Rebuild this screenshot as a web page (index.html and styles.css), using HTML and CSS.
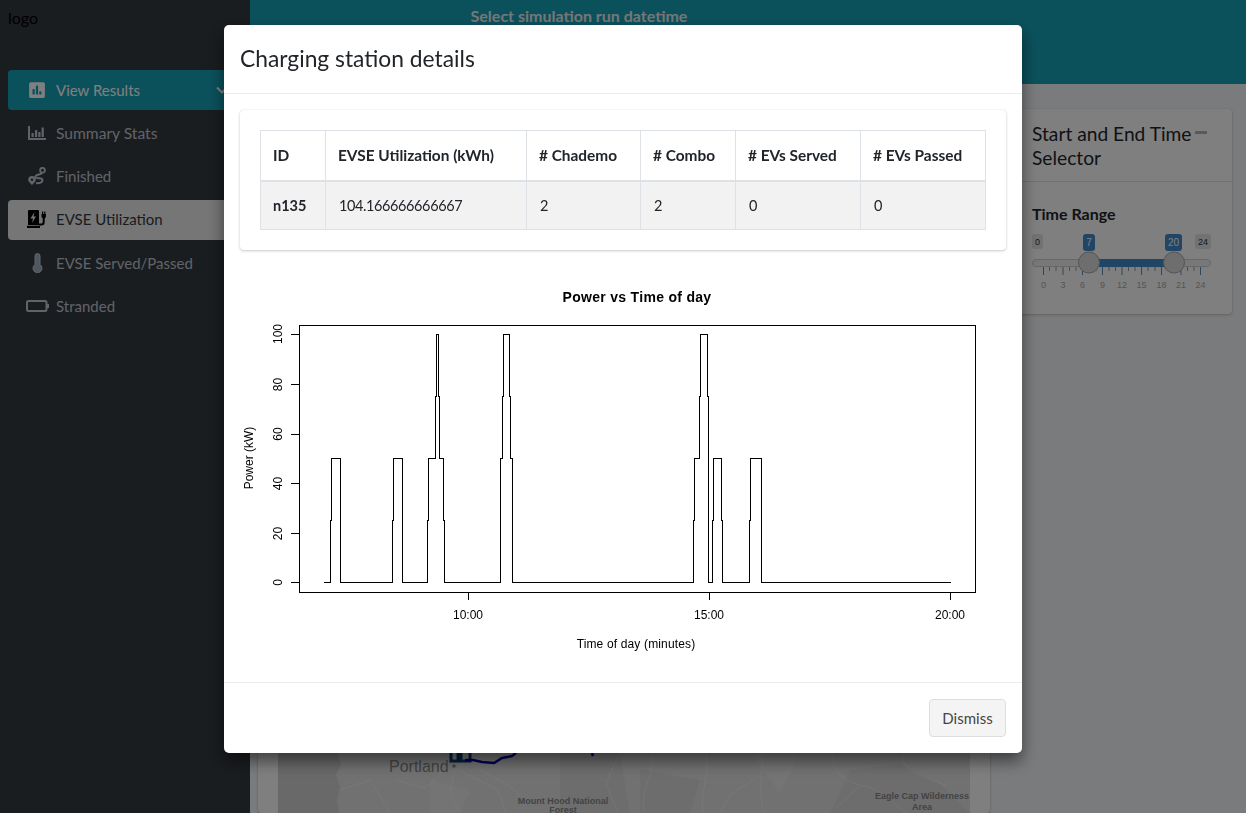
FILE: index.html
```html
<!DOCTYPE html>
<html lang="en">
<head>
  <meta charset="UTF-8" />
  <title>EVSE Utilization</title>
  <link rel="stylesheet" href="styles.css">
</head>
<body>
  <div class="wrapper">
    <aside class="sidebar">
      <div class="logo">logo</div>
      <nav class="nav">
        <a class="nav-item nav-open">
          <span class="nav-icon">
            <svg width="16" height="18" viewBox="0 0 448 512"><path fill="currentColor" d="M400 32H48C21.5 32 0 53.5 0 80v352c0 26.5 21.5 48 48 48h352c26.5 0 48-21.5 48-48V80c0-26.5-21.5-48-48-48zM160 368c0 8.84-7.16 16-16 16h-32c-8.84 0-16-7.16-16-16V240c0-8.84 7.16-16 16-16h32c8.84 0 16 7.16 16 16v128zm96 0c0 8.84-7.16 16-16 16h-32c-8.84 0-16-7.16-16-16V144c0-8.84 7.16-16 16-16h32c8.84 0 16 7.16 16 16v224zm96 0c0 8.84-7.16 16-16 16h-32c-8.84 0-16-7.16-16-16v-64c0-8.84 7.16-16 16-16h32c8.84 0 16 7.16 16 16v64z"/></svg>
          </span>
          View Results
          <svg class="chevron" width="12" height="8" viewBox="0 0 12 8"><path d="M1 1.500l5 5 5-5" fill="none" stroke="currentColor" stroke-width="2"/></svg>
        </a>
        <a class="nav-item">
          <span class="nav-icon">
            <svg width="18" height="14" viewBox="0 0 18 14"><path fill="currentColor" d="M0 0h2v12h16v2H0z"/><path fill="currentColor" d="M3.500 7h2.200v4H3.500zM7 4h2.200v7H7zM10.300 6h2.200v5h-2.200zM13.600 1.500h2.200V11h-2.200z"/></svg>
          </span>
          <span class="wide-label">Summary Stats</span>
        </a>
        <a class="nav-item">
          <span class="nav-icon">
            <svg width="19" height="18" viewBox="0 0 19 18"><path d="M14 6c-.5 2-6.500 1-6.500 3.700s7 .6 7 3.300-3 3.300-6.500 3.300" fill="none" stroke="currentColor" stroke-width="2"/><circle cx="14.500" cy="3.200" r="2.400" fill="none" stroke="currentColor" stroke-width="1.800"/><path fill="currentColor" d="M4 9a3.800 3.800 0 0 1 3.800 3.800C7.800 14.800 4 18 4 18S.2 14.800.2 12.800A3.800 3.800 0 0 1 4 9z"/><circle cx="4" cy="12.700" r="1.300" class="hole"/></svg>
          </span>
          Finished
        </a>
        <a class="nav-item nav-active">
          <span class="nav-icon">
            <svg width="21" height="18" viewBox="0 0 21 18"><path fill="#000" d="M2 0h9a1 1 0 0 1 1 1v14H1V1a1 1 0 0 1 1-1zM0 15.700h13V18H0z"/><path class="bolt" d="M7.500 2L3.500 8.500H6L5 13l4-6.500H6.500z"/><path d="M12 14.500h2.500c1.500 0 2.200-1 2.200-2.500V8" fill="none" stroke="#000" stroke-width="2"/><path fill="#000" d="M14.500 4h4.400v2.500c0 1.200-.9 2-2.200 2s-2.200-.8-2.200-2zM15 1.500h1.200V4H15zM17.200 1.500h1.200V4h-1.200z"/></svg>
          </span>
          EVSE Utilization
        </a>
        <a class="nav-item">
          <span class="nav-icon">
            <svg width="11" height="20" viewBox="0 0 11 20"><path class="thermo" d="M3 11.500V3a2.500 2.500 0 0 1 5 0v8.500a4.500 4.500 0 1 1-5 0z"/></svg>
          </span>
          EVSE Served/Passed
        </a>
        <a class="nav-item">
          <span class="nav-icon">
            <svg width="23" height="12" viewBox="0 0 23 12"><rect x="1" y="1" width="19.500" height="10" rx="1.500" fill="none" stroke="currentColor" stroke-width="2"/><path fill="currentColor" d="M21 4h2v4h-2z"/></svg>
          </span>
          Stranded
        </a>
      </nav>
    </aside>

    <div class="main">
      <header class="topbar">
        <label class="run-label">Select simulation run datetime</label>
      </header>
      <div class="content">
        <section class="card map-card">
          <div class="map-wrap">
            <svg class="map" width="634" height="684" viewBox="336 129 634 684">
              <path d="M338 129H970V813H339l-2-12 3-14-4-12 5-10-3-10z" fill="#e3e3e3"/>
              <path d="M560 753h60l10 60h-70zM640 770l60 10-10 33h-50zM850 770l50-6 40 20 30 29H830z" fill="#dadada"/>
              <path d="M430 780l40 10-10 23h-30zM750 753h50l-20 40z" fill="#e8e8e8"/>
              <g class="map-roads">
                <path d="M455 770l-5 20 10 23M470 753l-12 17 40 20 8 23M395 780l30 8 20-18M650 753c8 20-10 30-6 60M706 753c4 30-8 40-2 60M834 753c-6 20 16 30 30 33s20 10 42 27M860 786l-24 22M905 753c-10 16 20 24 42 33"/>
                <path d="M480 770l30 16 10 10M340 790l30-10 20 33M760 775l-30 20-10 18M620 753l-14 30 12 30M760 753c6 10-4 30 4 60"/>
              </g>
              <path class="map-route-dark" d="M451 753v8h7v-8M461 753v8h9v-8"/>
              <path class="map-route" d="M465 760h8l9 2 12 1 8-5 10-2 4-3"/>
              <path class="map-route" d="M592 753l1 3"/>
              <circle cx="454" cy="766" r="1.700" fill="#8c8c8c"/>
              <text class="map-city" x="389" y="772">Portland</text>
              <text class="map-park" x="563" y="804">Mount Hood National</text>
              <text class="map-park" x="563" y="812.500">Forest</text>
              <text class="map-park" x="922" y="799">Eagle Cap Wilderness</text>
              <text class="map-park" x="922" y="810">Area</text>
            </svg>
          </div>
        </section>

        <section class="card time-card">
          <div class="card-head">
            <h3 class="card-title">Start and End Time Selector</h3>
            <span class="minus"></span>
          </div>
          <div class="card-body">
            <div class="field-label">Time Range</div>
            <svg class="slider" width="180" height="70" viewBox="1032 230 180 70">
              <rect class="tag" x="1032" y="234" width="11" height="15" rx="3"/>
              <text class="tag-text" x="1037.500" y="245">0</text>
              <rect class="tag" x="1195" y="234" width="16" height="15" rx="3"/>
              <text class="tag-text" x="1203" y="245">24</text>
              <rect class="line" x="1032.500" y="259.500" width="178" height="7" rx="3.500"/>
              <rect class="bar" x="1089" y="259" width="85" height="8"/>
              <path class="major" d="M1043.500 267v8M1063 267v8M1082.500 267v8M1102.500 267v8M1122 267v8M1141.500 267v8M1161.500 267v8M1181 267v8M1200.500 267v8"/>
              <path class="minor" d="M1049.500 267v4M1056 267v4M1069.500 267v4M1076 267v4M1089 267v4M1096 267v4M1109 267v4M1115.500 267v4M1128.500 267v4M1135 267v4M1148 267v4M1155 267v4M1168 267v4M1174.500 267v4M1187.500 267v4M1194 267v4"/>
              <g class="grid-text">
                <text x="1043.500" y="288">0</text><text x="1063" y="288">3</text><text x="1082.500" y="288">6</text>
                <text x="1102.500" y="288">9</text><text x="1122" y="288">12</text><text x="1141.500" y="288">15</text>
                <text x="1161.500" y="288">18</text><text x="1181" y="288">21</text><text x="1200.500" y="288">24</text>
              </g>
              <rect class="tag-on" x="1083" y="234" width="12" height="17" rx="3"/>
              <text class="tag-on-text" x="1089" y="246">7</text>
              <rect class="tag-on" x="1165" y="234" width="17" height="17" rx="3"/>
              <text class="tag-on-text" x="1173.500" y="246">20</text>
              <circle class="handle" cx="1089" cy="262.500" r="10.500"/>
              <circle class="handle" cx="1174" cy="262.500" r="10.500"/>
            </svg>
          </div>
        </section>
      </div>
    </div>
  </div>

  <!-- modal on top of the dashboard -->
  <div class="backdrop">
    <div class="modal">
      <div class="modal-header">
        <h4 class="modal-title">Charging station details</h4>
      </div>
      <div class="modal-body">
        <div class="table-card">
          <table class="details">
            <colgroup>
              <col class="col-id"><col class="col-util"><col class="col-chademo">
              <col class="col-combo"><col class="col-served"><col class="col-passed">
            </colgroup>
            <thead>
              <tr>
                <th>ID</th>
                <th>EVSE Utilization (kWh)</th>
                <th># Chademo</th>
                <th># Combo</th>
                <th># EVs Served</th>
                <th># EVs Passed</th>
              </tr>
            </thead>
            <tbody>
              <tr>
                <th>n135</th>
                <td>104.166666666667</td>
                <td>2</td>
                <td>2</td>
                <td>0</td>
                <td>0</td>
              </tr>
            </tbody>
          </table>
        </div>

        <svg class="plot" width="766" height="396" viewBox="240 270 766 396">
          <text class="plot-title" x="637" y="302">Power vs Time of day</text>
          <rect class="plot-line" x="299.500" y="325.500" width="676" height="267"/>
          <path class="plot-line" d="M324 582.500H330.500V520H331.500V458.500H340.500V582.500H392.500V520H393.500V458.500H402.500V582.500H427.500V520H428.500V458.500H435.500V396H436.500V334.500H438.500V396H439.500V458.500H443.500V520H444.500V582.500H500.500V458.500H502.500V396H503.500V334.500H509.500V396H510.500V458.500H512.500V582.500H693.500V520H694.500V458.500H699.500V396H700.500V334.500H707.500V396H708.500V582.500H712.500V520H713.500V458.500H721.500V520H722.500V582.500H749.500V520H750.500V458.500H761.500V582.500H950.500"/>
          <path class="plot-line" d="M299 582.500h-8M299 533.500h-8M299 483.500h-8M299 434.500h-8M299 384.500h-8M299 334.500h-8M468.500 592v8M709.500 592v8M950.500 592v8"/>
          <g class="plot-text">
            <text transform="translate(282 582.500) rotate(-90)">0</text>
            <text transform="translate(282 533.500) rotate(-90)">20</text>
            <text transform="translate(282 483.500) rotate(-90)">40</text>
            <text transform="translate(282 434) rotate(-90)">60</text>
            <text transform="translate(282 384.500) rotate(-90)">80</text>
            <text transform="translate(282 334) rotate(-90)">100</text>
            <text transform="translate(253 458) rotate(-90)">Power (kW)</text>
            <text x="468" y="619">10:00</text>
            <text x="709" y="619">15:00</text>
            <text x="950" y="619">20:00</text>
            <text class="plot-xlab" x="636" y="648">Time of day (minutes)</text>
          </g>
        </svg>
      </div>
      <div class="modal-footer">
        <button type="button" class="btn-dismiss">Dismiss</button>
      </div>
    </div>
  </div>
</body>
</html>
```

FILE: styles.css
```css
* {
  box-sizing: border-box;
}

html, body {
  height: 100%;
}

body {
  margin: 0;
  overflow: hidden;
  font-family: Lato, "Noto Sans", sans-serif;
  font-size: 16px;
  color: #212529;
  background: #f4f6f9;
}

.wrapper {
  display: flex;
  height: 813px;
  overflow: hidden;
}

/* sidebar */
.sidebar {
  width: 250px;
  flex: none;
  background: #343a40;
}

.logo {
  height: 70px;
  padding: 8px;
  color: #000;
  line-height: 20px;
}

.nav {
  display: flex;
  flex-direction: column;
  gap: 3.2px;
  padding: 0 8px;
}

.nav-item {
  display: flex;
  align-items: center;
  gap: 7px;
  height: 40px;
  padding: 0 0 .4px 17px;
  border-radius: 4px;
  color: #c2c7d0;
  font-size: 15px;
}

.nav-open {
  background: #17a2b8;
  color: #fff;
}

.nav-active {
  background: #ececec;
  color: #343a40;
}

.nav-icon {
  display: flex;
  align-items: center;
  justify-content: center;
  width: 24px;
  flex: none;
}

.wide-label {
  font-size: 15.6px;
}

.hole {
  fill: #343a40;
}

.bolt {
  fill: #ececec;
}

.thermo {
  fill: #9fb0c4;
  stroke: #c2c7d0;
  stroke-width: 1;
}

.chevron {
  margin-left: auto;
  margin-right: 14px;
}

/* main area */
.main {
  flex: 1;
  min-width: 0;
}

.topbar {
  height: 84px;
  padding-top: 7px;
  background: #17a2b8;
  text-align: center;
}

.run-label {
  display: block;
  width: 658px;
  color: #eee;
  font-weight: 700;
  line-height: 18px;
}

.content {
  display: flex;
  align-items: flex-start;
  gap: 22px;
  padding: 25px 15px 0 8px;
}

.card {
  background: #fff;
  border-radius: 4px;
  box-shadow: 0 0 1px rgba(0, 0, 0, .125), 0 1px 3px rgba(0, 0, 0, .2);
}

.map-card {
  width: 732px;
  flex: none;
  height: 704px;
  padding: 20px 20px 0;
}

.map-wrap {
  height: 684px;
  padding-left: 58px;
  background: #d2d2d2;
}

.map {
  display: block;
}

.map-roads path {
  fill: none;
  stroke: #fff;
  stroke-opacity: .4;
  stroke-width: 1;
}

.map-route {
  fill: none;
  stroke: #0000b0;
  stroke-width: 2.500;
}

.map-route-dark {
  fill: none;
  stroke: #0a3f7a;
  stroke-width: 3;
}

.map-city {
  font-family: "Liberation Sans", sans-serif;
  font-size: 16px;
  fill: #888;
}

.map-park {
  font-family: "Liberation Sans", sans-serif;
  font-size: 9px;
  font-weight: 700;
  fill: #888;
  text-anchor: middle;
}

.time-card {
  flex: 1;
  height: 205px;
}

.card-head {
  display: flex;
  height: 73px;
  padding: 13px 14px 0 20px;
  border-bottom: 1px solid #dee2e6;
}

.card-title {
  width: 163px;
  margin: 0;
  font-size: 19.2px;
  font-weight: 400;
  line-height: 24px;
}

.minus {
  width: 12px;
  height: 3px;
  margin-top: 9px;
  background: #adb5bd;
}

.card-body {
  padding: 22px 20px 0;
}

.field-label {
  font-weight: 700;
  line-height: 20px;
}

.slider {
  display: block;
  margin-top: 6px;
  font-family: "Liberation Sans", sans-serif;
}

.slider text {
  text-anchor: middle;
}

.tag {
  fill: #e1e4e9;
}

.tag-text {
  font-size: 9px;
  fill: #333;
}

.tag-on {
  fill: #428bca;
}

.tag-on-text {
  font-size: 10px;
  fill: #fff;
}

.line {
  fill: #f0f0f0;
  stroke: #cfcfcf;
}

.bar {
  fill: #428bca;
}

.major, .minor {
  stroke: #999;
  fill: none;
}

.major {
  stroke: #5f8fb8;
}

.grid-text {
  font-size: 9px;
  fill: #aaa;
}

.handle {
  fill: #dcdcdc;
  stroke: #a8a8a8;
}

/* modal */
.backdrop {
  position: fixed;
  inset: 0;
  background: rgba(0, 0, 0, .5);
}

.modal {
  width: 798px;
  margin: 25px auto 0;
  background: #fff;
  border-radius: 5px;
  box-shadow: 0 8px 16px rgba(0, 0, 0, .5);
}

.modal-header {
  height: 69px;
  padding: 19px 16px 0;
  border-bottom: 1px solid #e9ecef;
}

.modal-title {
  margin: 0;
  font-size: 22.8px;
  font-weight: 400;
  line-height: 29px;
}

.modal-body {
  padding: 16px;
}

.table-card {
  height: 140px;
  padding: 20px;
  border-radius: 4px;
  box-shadow: 0 0 1px rgba(0, 0, 0, .125), 0 1px 3px rgba(0, 0, 0, .2);
}

.details {
  width: 725px;
  table-layout: fixed;
  border-collapse: collapse;
  font-size: 15.4px;
}

.col-id { width: 65px; }
.col-util { width: 201px; }
.col-chademo { width: 114px; }
.col-combo { width: 95px; }
.col-served { width: 125px; }
.col-passed { width: 125px; }

.details th, .details td {
  height: 50px;
  padding: 0 12px;
  border: 1px solid #dee2e6;
  text-align: left;
}

.details thead th {
  border-bottom-width: 2px;
}

.details tbody th, .details tbody td {
  height: 49px;
}

.details tbody th {
  font-size: 14.5px;
}

.details td {
  padding-left: 13px;
  font-size: 14.5px;
  letter-spacing: -.4px;
}

.details tbody tr {
  background: #f2f2f2;
}

.plot {
  display: block;
  margin-top: 20px;
  font-family: "Liberation Sans", sans-serif;
}

.plot-line {
  fill: none;
  stroke: #000;
  stroke-width: 1;
  shape-rendering: crispEdges;
}

.plot-title {
  font-size: 14px;
  font-weight: 700;
  letter-spacing: .3px;
  text-anchor: middle;
}

.plot-text {
  font-size: 12px;
  text-anchor: middle;
}

.plot-xlab {
  letter-spacing: .15px;
}

.modal-footer {
  display: flex;
  justify-content: flex-end;
  padding: 16px;
  border-top: 1px solid #e9ecef;
}

.btn-dismiss {
  width: 77px;
  height: 38px;
  padding: 0;
  background: #f4f4f4;
  border: 1px solid #ddd;
  border-radius: 4px;
  color: #444;
  font-family: inherit;
  font-size: 15px;
}
```
